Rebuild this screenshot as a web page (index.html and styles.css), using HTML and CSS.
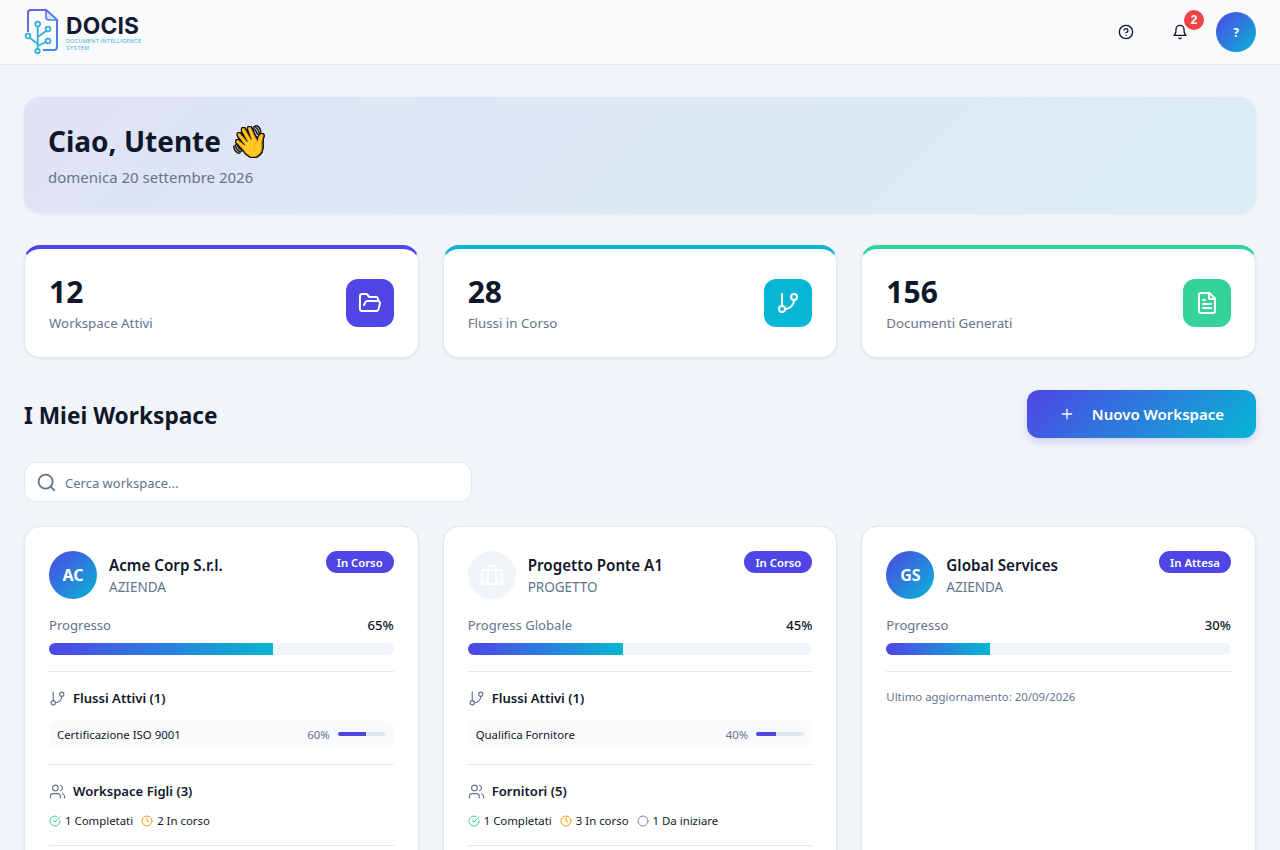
FILE: index.html
```html
<!DOCTYPE html>
<html lang="it">
<head>
  <meta charset="UTF-8">
  <meta name="viewport" content="width=device-width, initial-scale=1.0">
  <title>DOCIS - Dashboard</title>
  <link rel="stylesheet" href="styles.css">
</head>
<body>
  <svg class="icon-defs" width="0" height="0">
    <defs>
      <symbol id="i-help" viewBox="0 0 24 24"><circle cx="12" cy="12" r="10"/><path d="M9.09 9a3 3 0 0 1 5.83 1c0 2-3 3-3 3"/><path d="M12 17h.01"/></symbol>
      <symbol id="i-bell" viewBox="0 0 24 24"><path d="M6 8a6 6 0 0 1 12 0c0 7 3 9 3 9H3s3-2 3-9"/><path d="M10.3 21a1.94 1.94 0 0 0 3.4 0"/></symbol>
      <symbol id="i-folder" viewBox="0 0 24 24"><path d="m6 14 1.45-2.9A2 2 0 0 1 9.24 10H20a2 2 0 0 1 1.94 2.5l-1.55 6a2 2 0 0 1-1.94 1.5H4a2 2 0 0 1-2-2V5c0-1.1.9-2 2-2h3.93a2 2 0 0 1 1.66.9l.82 1.2a2 2 0 0 0 1.66.9H18a2 2 0 0 1 2 2v2"/></symbol>
      <symbol id="i-branch" viewBox="0 0 24 24"><path d="M6 3v12"/><circle cx="18" cy="6" r="3"/><circle cx="6" cy="18" r="3"/><path d="M18 9a9 9 0 0 1-9 9"/></symbol>
      <symbol id="i-file" viewBox="0 0 24 24"><path d="M14.5 2H6a2 2 0 0 0-2 2v16a2 2 0 0 0 2 2h12a2 2 0 0 0 2-2V7.5z"/><path d="M14 2v6h6"/><path d="M16 13H8"/><path d="M16 17H8"/><path d="M10 9H8"/></symbol>
      <symbol id="i-plus" viewBox="0 0 24 24"><path d="M12 5v14"/><path d="M5 12h14"/></symbol>
      <symbol id="i-search" viewBox="0 0 24 24"><circle cx="11" cy="11" r="8"/><path d="m21 21-4.3-4.3"/></symbol>
      <symbol id="i-users" viewBox="0 0 24 24"><path d="M16 21v-2a4 4 0 0 0-4-4H6a4 4 0 0 0-4 4v2"/><circle cx="9" cy="7" r="4"/><path d="M22 21v-2a4 4 0 0 0-3-3.87"/><path d="M16 3.13a4 4 0 0 1 0 7.75"/></symbol>
      <symbol id="i-check" viewBox="0 0 24 24"><path d="M22 11.08V12a10 10 0 1 1-5.93-9.14"/><path d="m22 4-10 10.01-3-3"/></symbol>
      <symbol id="i-clock" viewBox="0 0 24 24"><circle cx="12" cy="12" r="10"/><path d="M12 6v6l4 2"/></symbol>
      <symbol id="i-circle" viewBox="0 0 24 24"><circle cx="12" cy="12" r="10"/></symbol>
      <symbol id="i-case" viewBox="0 0 24 24"><rect x="2" y="7" width="20" height="14" rx="2"/><path d="M16 21V5a2 2 0 0 0-2-2h-4a2 2 0 0 0-2 2v16"/><path d="M8 21V7"/></symbol>
    </defs>
  </svg>

  <header class="topbar">
    <div class="logo">
      <svg class="logo-mark" viewBox="0 0 34 46" width="34" height="46">
        <defs>
          <linearGradient id="logo-grad" x1="0" y1="0" x2="0" y2="1">
            <stop offset="0" stop-color="#6d5fe0"/>
            <stop offset="1" stop-color="#3b8fe6"/>
          </linearGradient>
        </defs>
        <path d="M3 24V5a3 3 0 0 1 3-3h15l11 10v27a3 3 0 0 1-3 3H18" fill="none" stroke="url(#logo-grad)" stroke-width="2"/>
        <path d="M21 2v7a3 3 0 0 0 3 3h8z" fill="#dfe6fa" stroke="url(#logo-grad)" stroke-width="1.6"/>
        <g fill="none" stroke="#35aedb" stroke-width="1.8">
          <path d="M12.7 41V18M12.7 36 5 30M12.7 29 21 23M12.7 38 21 34"/>
          <circle cx="12.7" cy="16" r="2.4" fill="#f9fbfd"/>
          <circle cx="23" cy="21" r="2.4" fill="#f9fbfd"/>
          <circle cx="23" cy="33" r="2.4" fill="#f9fbfd"/>
          <circle cx="3" cy="28" r="2.4" fill="#f9fbfd"/>
          <circle cx="12.5" cy="43" r="2.2" fill="#f9fbfd"/>
        </g>
      </svg>
      <div class="logo-text">
        <span class="logo-name">DOCIS</span>
        <span class="logo-sub">DOCUMENT INTELLIGENCE<br>SYSTEM</span>
      </div>
    </div>
    <div class="topbar-actions">
      <button class="icon-btn"><svg class="ico"><use href="#i-help"/></svg></button>
      <button class="icon-btn">
        <svg class="ico"><use href="#i-bell"/></svg>
        <span class="badge">2</span>
      </button>
      <div class="avatar">?</div>
    </div>
  </header>

  <main class="content">
    <section class="welcome">
      <h1>Ciao, Utente <span class="wave">👋</span></h1>
      <p>domenica 20 settembre 2026</p>
    </section>

    <section class="stats">
      <div class="stat stat-indigo">
        <div>
          <div class="stat-value">12</div>
          <div class="stat-label">Workspace Attivi</div>
        </div>
        <div class="stat-icon"><svg class="ico"><use href="#i-folder"/></svg></div>
      </div>
      <div class="stat stat-cyan">
        <div>
          <div class="stat-value">28</div>
          <div class="stat-label">Flussi in Corso</div>
        </div>
        <div class="stat-icon"><svg class="ico"><use href="#i-branch"/></svg></div>
      </div>
      <div class="stat stat-green">
        <div>
          <div class="stat-value">156</div>
          <div class="stat-label">Documenti Generati</div>
        </div>
        <div class="stat-icon"><svg class="ico"><use href="#i-file"/></svg></div>
      </div>
    </section>

    <div class="section-head">
      <h2>I Miei Workspace</h2>
      <button class="btn-primary"><svg class="ico"><use href="#i-plus"/></svg>Nuovo Workspace</button>
    </div>

    <div class="search">
      <svg class="ico"><use href="#i-search"/></svg>
      <input type="text" placeholder="Cerca workspace...">
    </div>

    <section class="cards">
      <article class="card">
        <div class="card-head">
          <div class="card-id">
            <div class="card-avatar">AC</div>
            <div>
              <div class="card-name">Acme Corp S.r.l.</div>
              <div class="card-type">AZIENDA</div>
            </div>
          </div>
          <span class="pill">In Corso</span>
        </div>
        <div class="progress-row"><span>Progresso</span><strong>65%</strong></div>
        <div class="progress"><div class="progress-fill" style="width: 65%"></div></div>
        <div class="block">
          <div class="block-title"><svg class="ico"><use href="#i-branch"/></svg>Flussi Attivi (1)</div>
          <div class="flow">
            <span class="flow-name">Certificazione ISO 9001</span>
            <span class="flow-pct">60%</span>
            <div class="flow-bar"><div class="flow-fill" style="width: 60%"></div></div>
          </div>
        </div>
        <div class="block">
          <div class="block-title"><svg class="ico"><use href="#i-users"/></svg>Workspace Figli (3)</div>
          <div class="status-row">
            <span class="status"><svg class="ico done"><use href="#i-check"/></svg>1 Completati</span>
            <span class="status"><svg class="ico doing"><use href="#i-clock"/></svg>2 In corso</span>
          </div>
        </div>
        <div class="block"></div>
      </article>

      <article class="card">
        <div class="card-head">
          <div class="card-id">
            <div class="card-avatar card-avatar-empty"><svg class="ico"><use href="#i-case"/></svg></div>
            <div>
              <div class="card-name">Progetto Ponte A1</div>
              <div class="card-type">PROGETTO</div>
            </div>
          </div>
          <span class="pill">In Corso</span>
        </div>
        <div class="progress-row"><span>Progress Globale</span><strong>45%</strong></div>
        <div class="progress"><div class="progress-fill" style="width: 45%"></div></div>
        <div class="block">
          <div class="block-title"><svg class="ico"><use href="#i-branch"/></svg>Flussi Attivi (1)</div>
          <div class="flow">
            <span class="flow-name">Qualifica Fornitore</span>
            <span class="flow-pct">40%</span>
            <div class="flow-bar"><div class="flow-fill" style="width: 40%"></div></div>
          </div>
        </div>
        <div class="block">
          <div class="block-title"><svg class="ico"><use href="#i-users"/></svg>Fornitori (5)</div>
          <div class="status-row">
            <span class="status"><svg class="ico done"><use href="#i-check"/></svg>1 Completati</span>
            <span class="status"><svg class="ico doing"><use href="#i-clock"/></svg>3 In corso</span>
            <span class="status"><svg class="ico todo"><use href="#i-circle"/></svg>1 Da iniziare</span>
          </div>
        </div>
        <div class="block"></div>
      </article>

      <article class="card">
        <div class="card-head">
          <div class="card-id">
            <div class="card-avatar">GS</div>
            <div>
              <div class="card-name">Global Services</div>
              <div class="card-type">AZIENDA</div>
            </div>
          </div>
          <span class="pill">In Attesa</span>
        </div>
        <div class="progress-row"><span>Progresso</span><strong>30%</strong></div>
        <div class="progress"><div class="progress-fill" style="width: 30%"></div></div>
        <div class="block">
          <p class="updated">Ultimo aggiornamento: 20/09/2026</p>
        </div>
      </article>
    </section>
  </main>
</body>
</html>
```

FILE: styles.css
```css
:root {
  --primary: #4f46e5;
  --cyan: #06b6d4;
  --green: #34d399;
  --amber: #f59e0b;
  --ink: #0f172a;
  --muted: #64748b;
  --line: #e2e8f0;
  --bg: #f1f5f9;
  --grad: linear-gradient(135deg, #4f46e5, #06b6d4);
  --grad-h: linear-gradient(90deg, #4f46e5, #06b6d4);
}

* {
  box-sizing: border-box;
}

html, body {
  height: 850px;
  overflow: hidden;
}

body {
  margin: 0;
  font-family: "Noto Sans", "Open Sans", sans-serif;
  background-color: var(--bg);
  color: var(--ink);
}

.icon-defs {
  position: absolute;
}

.ico {
  width: 16px;
  height: 16px;
  fill: none;
  stroke: currentColor;
  stroke-width: 2;
  stroke-linecap: round;
  stroke-linejoin: round;
  flex-shrink: 0;
}

/* top bar */
.topbar {
  height: 65px;
  display: flex;
  justify-content: space-between;
  align-items: center;
  padding: 0 24px;
  background-color: #f8fafc;
  border-bottom: 1px solid var(--line);
}

.logo {
  display: flex;
  align-items: center;
  gap: 7px;
  padding-left: 1px;
}

.logo-mark {
  overflow: visible;
  margin-top: -2px;
}

.logo-text {
  display: flex;
  flex-direction: column;
  padding-top: 1px;
}

.logo-name {
  font-family: "Inter", sans-serif;
  font-size: 22.8px;
  line-height: 25px;
  font-weight: 700;
  letter-spacing: 0.2px;
  color: #141a33;
}

.logo-sub {
  font-family: "Inter", sans-serif;
  font-size: 5.3px;
  line-height: 7.5px;
  letter-spacing: 0.25px;
  color: #3fb5d8;
}

.topbar-actions {
  display: flex;
  align-items: center;
  gap: 14px;
}

.icon-btn {
  position: relative;
  width: 40px;
  height: 40px;
  display: flex;
  align-items: center;
  justify-content: center;
  padding: 0;
  border: none;
  background: none;
  color: var(--ink);
}

.badge {
  position: absolute;
  top: -2px;
  right: -4px;
  width: 20px;
  height: 20px;
  display: flex;
  align-items: center;
  justify-content: center;
  border-radius: 50%;
  background-color: #ef4444;
  color: #fff;
  font-family: inherit;
  font-size: 12px;
  font-weight: 700;
}

.avatar {
  width: 40px;
  height: 40px;
  display: flex;
  align-items: center;
  justify-content: center;
  margin-left: 2px;
  border-radius: 50%;
  background: var(--grad);
  color: #fff;
  font-size: 12px;
  font-weight: 700;
}

/* page */
.content {
  padding: 32px 24px;
}

.welcome {
  height: 116px;
  padding: 24px;
  border-radius: 16px;
  background: linear-gradient(135deg, #e0e3f6, #dbedf4);
  box-shadow: 0 1px 3px rgba(15, 23, 42, 0.08);
}

.welcome h1 {
  margin: 0 0 4px;
  font-size: 28px;
  line-height: 40px;
  font-weight: 700;
}

.wave {
  font-size: 30px;
  line-height: 1;
  margin-left: 3px;
  filter: drop-shadow(1px 0 0 #111) drop-shadow(-1px 0 0 #111) drop-shadow(0 1px 0 #111) drop-shadow(0 -1px 0 #111);
}

.welcome p {
  margin: 0;
  font-size: 15px;
  line-height: 24px;
  color: var(--muted);
}

.stats {
  display: grid;
  grid-template-columns: repeat(3, 1fr);
  gap: 24px;
  margin-top: 32px;
}

.stat {
  height: 113px;
  display: flex;
  justify-content: space-between;
  align-items: center;
  padding: 0 24px;
  background-color: #fff;
  border: 1px solid var(--line);
  border-top-width: 4px;
  border-radius: 16px;
  box-shadow: 0 1px 3px rgba(15, 23, 42, 0.08);
}

.stat-indigo { border-top-color: var(--primary); }
.stat-cyan { border-top-color: var(--cyan); }
.stat-green { border-top-color: var(--green); }

.stat-value {
  font-size: 30px;
  line-height: 38px;
  font-weight: 700;
}

.stat-label {
  margin-top: 2px;
  font-size: 13.3px;
  line-height: 20px;
  color: var(--muted);
}

.stat-icon {
  width: 48px;
  height: 48px;
  display: flex;
  align-items: center;
  justify-content: center;
  border-radius: 12px;
  color: #fff;
}

.stat-icon .ico {
  width: 24px;
  height: 24px;
}

.stat-indigo .stat-icon { background-color: var(--primary); }
.stat-cyan .stat-icon { background-color: var(--cyan); }
.stat-green .stat-icon { background-color: var(--green); }

.section-head {
  display: flex;
  justify-content: space-between;
  align-items: center;
  margin-top: 32px;
}

.section-head h2 {
  margin: 2px 0 0;
  font-size: 22.7px;
  font-weight: 700;
}

.btn-primary {
  height: 48px;
  display: flex;
  align-items: center;
  gap: 17px;
  padding: 0 32px;
  border: none;
  border-radius: 12px;
  background: var(--grad);
  color: #fff;
  font-family: inherit;
  font-size: 15px;
  font-weight: 600;
  box-shadow: 0 4px 8px rgba(79, 70, 229, 0.2);
}

.search {
  width: 448px;
  height: 40px;
  display: flex;
  align-items: center;
  gap: 8px;
  margin-top: 24px;
  padding: 0 11px;
  background-color: #fff;
  border: 1px solid var(--line);
  border-radius: 12px;
  color: var(--muted);
}

.search .ico {
  width: 21px;
  height: 21px;
}

.search input {
  flex: 1;
  border: none;
  outline: none;
  background: none;
  padding: 2px 0 0;
  font-family: inherit;
  font-size: 13px;
}

.search input::placeholder {
  color: var(--muted);
  opacity: 1;
}

/* workspace cards */
.cards {
  display: grid;
  grid-template-columns: repeat(3, 1fr);
  gap: 24px;
  margin-top: 24px;
}

.card {
  height: 420px;
  padding: 24px;
  background-color: #fff;
  border: 1px solid var(--line);
  border-radius: 16px;
  box-shadow: 0 1px 3px rgba(15, 23, 42, 0.08);
}

.card-head {
  display: flex;
  justify-content: space-between;
  align-items: flex-start;
}

.card-id {
  display: flex;
  align-items: center;
  gap: 12px;
}

.card-avatar {
  width: 48px;
  height: 48px;
  display: flex;
  align-items: center;
  justify-content: center;
  border-radius: 50%;
  background: var(--grad);
  color: #fff;
  font-size: 16px;
  font-weight: 700;
}

.card-avatar-empty {
  background: var(--bg);
}

.card-avatar-empty .ico {
  width: 24px;
  height: 24px;
  color: #fff;
  stroke-width: 1.8;
}

.card-name {
  margin-top: 2px;
  font-size: 15.2px;
  line-height: 22px;
  font-weight: 600;
}

.card-type {
  font-size: 13.5px;
  line-height: 22px;
  color: var(--muted);
}

.pill {
  height: 22px;
  display: flex;
  align-items: center;
  padding: 0 11px;
  border-radius: 11px;
  background-color: var(--primary);
  color: #fff;
  font-size: 11.3px;
  font-weight: 600;
}

.progress-row {
  display: flex;
  justify-content: space-between;
  margin-top: 16px;
  font-size: 13.1px;
  line-height: 20px;
  color: var(--muted);
}

.progress-row strong {
  font-weight: 500;
  color: var(--ink);
}

.progress {
  height: 12px;
  margin-top: 8px;
  border-radius: 6px;
  background-color: var(--bg);
  overflow: hidden;
}

.progress-fill {
  height: 100%;
  background: var(--grad-h);
}

.block {
  margin-top: 16px;
  padding-top: 16px;
  border-top: 1px solid var(--line);
}

.block-title {
  display: flex;
  align-items: center;
  gap: 7px;
  font-size: 13.1px;
  line-height: 20px;
  font-weight: 600;
}

.block-title .ico {
  width: 17px;
  height: 17px;
  color: var(--muted);
  stroke-width: 1.6;
}

.flow {
  height: 28px;
  display: flex;
  align-items: center;
  margin-top: 12px;
  padding: 0 8px;
  border-radius: 10px;
  background-color: #f8fafc;
  font-size: 11.4px;
}

.flow-name {
  flex: 1;
}

.flow-pct {
  margin-right: 8px;
  color: var(--muted);
}

.flow-bar {
  width: 48px;
  height: 4px;
  border-radius: 2px;
  background-color: var(--line);
  overflow: hidden;
}

.flow-fill {
  height: 100%;
  background-color: var(--primary);
}

.status-row {
  display: flex;
  gap: 8px;
  margin-top: 12px;
  font-size: 11.4px;
  line-height: 16px;
}

.status {
  display: flex;
  align-items: center;
  gap: 4px;
}

.status .ico {
  width: 12px;
  height: 12px;
}

.done { color: var(--green); }
.doing { color: var(--amber); }
.todo { color: #7c8798; }

.updated {
  margin: 0;
  font-size: 11.4px;
  line-height: 18px;
  color: var(--muted);
}
```
